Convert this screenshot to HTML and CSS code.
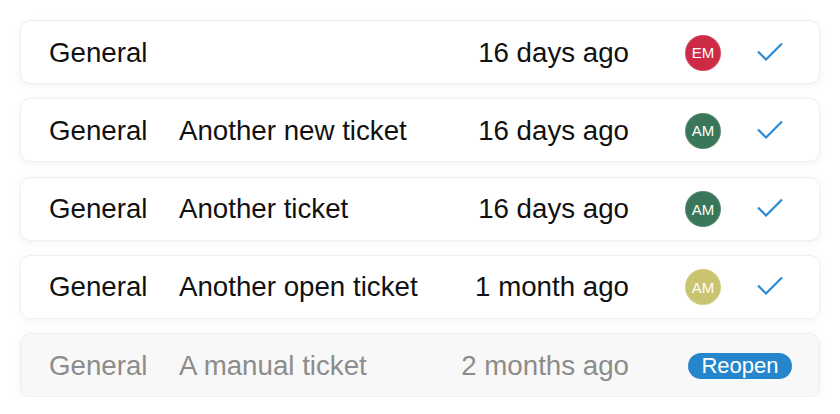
FILE: index.html
```html
<!DOCTYPE html>
<html>
<head>
<meta charset="utf-8">
<link rel="stylesheet" href="styles.css">
</head>
<body>
<div class="list">
  <div class="ticket">
    <span class="cat">General</span>
    <span class="subject"></span>
    <span class="time">16 days ago</span>
    <span class="actions"><span class="avatar red">EM</span><svg class="check" viewBox="0 0 26 19"><path d="M1 9.5 L9 17.5 L25 1.5" fill="none" stroke="#2a8bd4" stroke-width="2.2"/></svg></span>
  </div>
  <div class="ticket">
    <span class="cat">General</span>
    <span class="subject">Another new ticket</span>
    <span class="time">16 days ago</span>
    <span class="actions"><span class="avatar green">AM</span><svg class="check" viewBox="0 0 26 19"><path d="M1 9.5 L9 17.5 L25 1.5" fill="none" stroke="#2a8bd4" stroke-width="2.2"/></svg></span>
  </div>
  <div class="ticket">
    <span class="cat">General</span>
    <span class="subject">Another ticket</span>
    <span class="time">16 days ago</span>
    <span class="actions"><span class="avatar green">AM</span><svg class="check" viewBox="0 0 26 19"><path d="M1 9.5 L9 17.5 L25 1.5" fill="none" stroke="#2a8bd4" stroke-width="2.2"/></svg></span>
  </div>
  <div class="ticket">
    <span class="cat">General</span>
    <span class="subject">Another open ticket</span>
    <span class="time">1 month ago</span>
    <span class="actions"><span class="avatar olive">AM</span><svg class="check" viewBox="0 0 26 19"><path d="M1 9.5 L9 17.5 L25 1.5" fill="none" stroke="#2a8bd4" stroke-width="2.2"/></svg></span>
  </div>
  <div class="ticket closed">
    <span class="cat">General</span>
    <span class="subject">A manual ticket</span>
    <span class="time">2 months ago</span>
    <span class="actions"><button class="reopen">Reopen</button></span>
  </div>
</div>
</body>
</html>
```
FILE: styles.css
```css
html, body {
  margin: 0;
  padding: 0;
  background: #ffffff;
}
body {
  font-family: "Liberation Sans", Arial, sans-serif;
}
.list {
  padding: 20px 20px 0 20px;
  display: flex;
  flex-direction: column;
  gap: 14.25px;
}
.ticket {
  box-sizing: border-box;
  height: 64px;
  background: #ffffff;
  border: 1px solid #efefef;
  border-radius: 10px;
  box-shadow: 0 2px 10px rgba(0, 0, 0, 0.05);
  display: grid;
  grid-template-columns: 130px 1fr auto 107px;
  align-items: center;
  padding: 1px 27px 0 28px;
  font-size: 27.7px;
  color: #111111;
}
.ticket.closed {
  background: #f8f8f8;
  color: #8c8c8c;
}
.time {
  margin-right: 56px;
}
.actions {
  display: flex;
  align-items: center;
}
.avatar {
  width: 36px;
  height: 36px;
  border-radius: 50%;
  display: flex;
  align-items: center;
  justify-content: center;
  color: #ffffff;
  font-size: 15px;
  box-sizing: border-box;
  border: 1px solid rgba(255, 255, 255, 0.15);
}
.red { background: #cc2a45; }
.green { background: #3a7659; }
.olive { background: #c9c46f; }
.check {
  width: 26px;
  height: 19px;
  margin-left: 36px;
  margin-top: -3px;
}
.reopen {
  margin-left: 3px;
  width: 104px;
  height: 26px;
  border: none;
  border-radius: 13px;
  background: #2686cc;
  color: #ffffff;
  font-family: "Liberation Sans", Arial, sans-serif;
  font-size: 22px;
  padding: 0;
  line-height: 26px;
}
```
